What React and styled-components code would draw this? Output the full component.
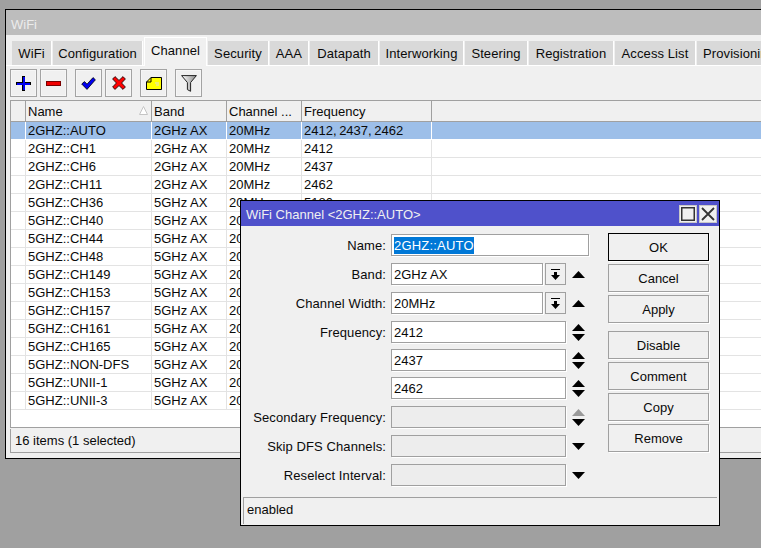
import React from "react";
import styled, { createGlobalStyle } from "styled-components";

const Global = createGlobalStyle`
  html, body { margin: 0; padding: 0; background: #a0a0a0; overflow: hidden; }
  body { font: 13px/16px "Liberation Sans", Arial, sans-serif; color: #0a0a0a; }
`;

const Desktop = styled.div`
  position: relative;
  width: 761px;
  height: 548px;
  overflow: hidden;
  background: #a0a0a0;
`;

const Win = styled.div`
  position: absolute;
  left: 5px;
  top: 9px;
  width: 800px;
  height: 450px;
  box-sizing: border-box;
  border: 1px solid #000;
  background: #f0f0f0;
  display: flex;
  flex-direction: column;
`;

const WinTitle = styled.div`
  height: 25px;
  flex: none;
  background: #bdbdbd;
  color: #ececec;
  padding-left: 5px;
  line-height: 29px;
  font-size: 13px;
`;

const TabStrip = styled.div`
  height: 31px;
  flex: none;
  box-sizing: border-box;
  border-bottom: 1px solid #fff;
  padding-left: 6px;
  display: flex;
  align-items: flex-end;
  gap: 1px;
`;

const Tab = styled.div`
  flex: none;
  box-sizing: border-box;
  width: ${(p) => p.$w}px;
  height: ${(p) => (p.$active ? 29 : 24)}px;
  margin-bottom: ${(p) => (p.$active ? -1 : 0)}px;
  background: ${(p) => (p.$active ? "#f0f0f0" : "#d9d9d9")};
  border-right: 1px solid #fff;
  ${(p) => p.$active && "border-top: 1px solid #fff; border-left: 1px solid #fff;"}
  text-align: center;
  line-height: ${(p) => (p.$active ? 25 : 26)}px;
  letter-spacing: 0.1px;
  white-space: nowrap;
  overflow: hidden;
`;

const ProvTab = styled(Tab)`
  text-align: left;
  padding-left: 6px;
`;

const Toolbar = styled.div`
  height: 34px;
  flex: none;
  box-sizing: border-box;
  padding: 3px 0 0 4px;
  display: flex;
  gap: 8px;
`;

const ToolGroup = styled.div`
  display: flex;
  gap: 3px;
`;

const ToolButton = styled.div`
  width: 27px;
  height: 28px;
  box-sizing: border-box;
  border: 1px solid #a3a3a3;
  box-shadow: inset 0 0 0 1px #f6f6f6;
  background: #f0f0f0;
  display: flex;
  align-items: center;
  justify-content: center;
`;

const Table = styled.div`
  flex: 1;
  margin-left: 4px;
  box-sizing: border-box;
  border: 1px solid #a0a0a0;
  border-right: none;
  background: #fff;
  overflow: hidden;
`;

const HeadRow = styled.div`
  display: grid;
  grid-template-columns: 15px 126px 75px 75px 130px 1fr;
  height: 21px;
  box-sizing: border-box;
  background: #f0f0f0;
  border-bottom: 1px solid #a0a0a0;
`;

const HeadCell = styled.div`
  position: relative;
  box-sizing: border-box;
  border-right: 1px solid #a0a0a0;
  padding-left: 2px;
  line-height: 21px;
  white-space: nowrap;
  overflow: hidden;
`;

const SortMark = styled.svg`
  position: absolute;
  right: 3px;
  top: 5px;
`;

const Row = styled.div`
  display: grid;
  grid-template-columns: 15px 126px 75px 75px 130px 1fr;
  height: 18px;
  box-sizing: border-box;
  border-bottom: 1px solid ${(p) => (p.$sel ? "#fff" : "#e3e3e3")};
  background: ${(p) => (p.$sel ? "#9dbfe9" : "#fff")};
`;

const Cell = styled.div`
  box-sizing: border-box;
  border-right: 1px solid ${(p) => (p.$sel ? "#fff" : "#e3e3e3")};
  padding-left: 2px;
  line-height: 17px;
  white-space: nowrap;
  overflow: hidden;
  word-spacing: ${(p) => (p.$list ? "-1px" : "0")};
`;

const FillCell = styled.div``;

const WinStatus = styled.div`
  height: 23px;
  flex: none;
  margin: 1px 0 5px 4px;
  border-left: 1px solid #a0a0a0;
  border-bottom: 1px solid #a0a0a0;
  padding-left: 4px;
  line-height: 23px;
  background: #f0f0f0;
`;

const Dialog = styled.div`
  position: absolute;
  left: 240px;
  top: 200px;
  width: 480px;
  height: 326px;
  box-sizing: border-box;
  border: 1px solid #000;
  background: #f0f0f0;
  display: flex;
  flex-direction: column;
`;

const DlgTitle = styled.div`
  height: 25px;
  flex: none;
  box-sizing: border-box;
  background: #4f51cb;
  color: #f0f0f0;
  padding: 4px 2px 0 5px;
  display: flex;
  justify-content: space-between;
  line-height: 20px;
`;

const WinBtns = styled.div`
  display: flex;
  gap: 2px;
`;

const WinBtn = styled.div`
  width: 18px;
  height: 18px;
  box-sizing: border-box;
  background: #f0f0f0;
  border: 1px solid #c8c8c8;
  display: flex;
  align-items: center;
  justify-content: center;
`;

const DlgMain = styled.div`
  flex: 1;
  display: flex;
  min-height: 0;
`;

const Form = styled.div`
  width: 367px;
  flex: none;
  padding-top: 8px;
  box-sizing: border-box;
  display: flex;
  flex-direction: column;
`;

const FormRow = styled.div`
  display: flex;
  height: 22px;
  align-items: center;
  margin-top: ${(p) => p.$mt ?? 7}px;
`;

const Label = styled.div`
  width: 145px;
  height: 22px;
  margin-right: 5px;
  flex: none;
  text-align: right;
  white-space: nowrap;
  line-height: 24px;
  letter-spacing: 0.1px;
`;

const Field = styled.div`
  width: ${(p) => p.$w}px;
  height: 22px;
  flex: none;
  box-sizing: border-box;
  border: 1px solid #a0a0a0;
  box-shadow: 1px 1px 0 #fff;
  background: ${(p) => (p.$off ? "#ededed" : "#fff")};
  padding-left: 2px;
  line-height: 21px;
  white-space: nowrap;
`;

const Selected = styled.span`
  background: #0078d7;
  color: #fff;
  display: inline-block;
  height: 17px;
  margin-top: 2px;
  line-height: 17px;
  letter-spacing: 0.2px;
  vertical-align: top;
`;

const DropBtn = styled.div`
  width: 21px;
  height: 22px;
  flex: none;
  margin-left: 2px;
  box-sizing: border-box;
  border: 1px solid #a0a0a0;
  display: flex;
  align-items: center;
  justify-content: center;
`;

const ArrowSlot = styled.div`
  width: 13px;
  flex: none;
  margin-left: ${(p) => p.$ml ?? 6}px;
  display: flex;
  align-items: center;
  justify-content: center;
`;

const Actions = styled.div`
  width: 101px;
  padding-top: 7px;
  display: flex;
  flex-direction: column;
`;

const ActionBtn = styled.div`
  height: 28px;
  flex: none;
  box-sizing: border-box;
  border: 1px solid ${(p) => (p.$def ? "#000" : "#a0a0a0")};
  box-shadow: 1px 1px 0 #fff;
  margin-top: ${(p) => p.$mt ?? 3}px;
  text-align: center;
  line-height: 27px;
`;

const DlgStatus = styled.div`
  height: 27px;
  flex: none;
  margin: 0 2px 1px 2px;
  box-sizing: border-box;
  border-top: 1px solid #a0a0a0;
  border-left: 1px solid #a0a0a0;
  padding-left: 3px;
  line-height: 23px;
`;

const Plus = () => (
  <svg width="15" height="15" viewBox="0 0 15 15" shapeRendering="crispEdges">
    <path d="M6 0h3v6h6v3H9v6H6V9H0V6h6z" fill="#000" />
    <path d="M6.500 1h2v5.500H14v2H8.500V14h-2V8.500H1v-2h5.500z" fill="#0000f0" />
  </svg>
);
const Minus = () => (
  <svg width="15" height="5" viewBox="0 0 15 5" shapeRendering="crispEdges">
    <rect width="15" height="5" fill="#7a0000" />
    <rect x="1" y="1" width="13" height="3" fill="#f00000" />
  </svg>
);
const Check = () => (
  <svg width="15" height="13" viewBox="0 0 15 13">
    <path d="M.7 7l2.800-2.400L6 7.200 12 .6l2.400 2.200L6 12.400z" fill="#0000f0" stroke="#000" strokeWidth=".8" />
  </svg>
);
const Cross = () => (
  <svg width="14" height="14" viewBox="0 0 14 14">
    <path d="M3 .6L7 4.400 11 .6l2.400 2.400L9.600 7l3.800 4-2.400 2.400L7 9.600l-4 3.800L.6 11l3.800-4L.6 3z" fill="#ff0000" stroke="#000" strokeWidth=".8" />
  </svg>
);
const Note = () => (
  <svg width="16" height="13" viewBox="0 0 16 13">
    <path d="M5 .5h10.500v12H.5V5z" fill="#ffff00" stroke="#000" />
    <path d="M.5 5H5V.5" fill="none" stroke="#000" />
    <path d="M9 6h4M10 8h3" stroke="#ddd" />
  </svg>
);
const Funnel = () => (
  <svg width="16" height="17" viewBox="0 0 16 17">
    <defs>
      <linearGradient id="fg" x1="0" x2="1">
        <stop offset="0" stopColor="#fff" />
        <stop offset="1" stopColor="#8a8a8a" />
      </linearGradient>
    </defs>
    <path d="M.6.6h14.800L9.600 7.500v8.800L6.400 14.600V7.500z" fill="url(#fg)" stroke="#222" />
  </svg>
);
const Up = ({ c = "#000" }) => (
  <svg width="13" height="7" viewBox="0 0 13 7" style={{ display: "block" }}>
    <path d="M6.500 0L13 7H0z" fill={c} />
  </svg>
);
const Down = ({ c = "#000" }) => (
  <svg width="13" height="7" viewBox="0 0 13 7" style={{ display: "block" }}>
    <path d="M0 0h13L6.500 7z" fill={c} />
  </svg>
);
const UpDown = ({ off }) => (
  <svg width="13" height="17" viewBox="0 0 13 17">
    <path d="M6.500 0L13 7H0z" fill={off ? "#9a9a9a" : "#000"} />
    <path d="M0 10h13l-6.500 7z" fill="#000" />
  </svg>
);
const DropIcon = () => (
  <svg width="11" height="11" viewBox="0 0 11 11">
    <path d="M1 .5h9" stroke="#000" strokeWidth="1" />
    <path d="M4 3h3v3h3l-4.500 5L1 6h3z" fill="#000" />
  </svg>
);

const TABS = [
  ["WiFi", 40],
  ["Configuration", 90],
  ["Channel", 63, true],
  ["Security", 61],
  ["AAA", 39],
  ["Datapath", 69],
  ["Interworking", 84],
  ["Steering", 63],
  ["Registration", 85],
  ["Access List", 81],
];

const ROWS = [
  ["2GHZ::AUTO", "2GHz AX", "20MHz", "2412, 2437, 2462"],
  ["2GHZ::CH1", "2GHz AX", "20MHz", "2412"],
  ["2GHZ::CH6", "2GHz AX", "20MHz", "2437"],
  ["2GHZ::CH11", "2GHz AX", "20MHz", "2462"],
  ["5GHZ::CH36", "5GHz AX", "20MHz", "5180"],
  ["5GHZ::CH40", "5GHz AX", "20MHz", "5200"],
  ["5GHZ::CH44", "5GHz AX", "20MHz", "5220"],
  ["5GHZ::CH48", "5GHz AX", "20MHz", "5240"],
  ["5GHZ::CH149", "5GHz AX", "20MHz", "5745"],
  ["5GHZ::CH153", "5GHz AX", "20MHz", "5765"],
  ["5GHZ::CH157", "5GHz AX", "20MHz", "5785"],
  ["5GHZ::CH161", "5GHz AX", "20MHz", "5805"],
  ["5GHZ::CH165", "5GHz AX", "20MHz", "5825"],
  ["5GHZ::NON-DFS", "5GHz AX", "20MHz", ""],
  ["5GHZ::UNII-1", "5GHz AX", "20MHz", ""],
  ["5GHZ::UNII-3", "5GHz AX", "20MHz", ""],
];

export default function App() {
  return (
    <Desktop>
      <Global />
      <Win>
        <WinTitle>WiFi</WinTitle>
        <TabStrip>
          {TABS.map(([t, w, a]) => (
            <Tab key={t} $w={w} $active={a}>
              {t}
            </Tab>
          ))}
          <ProvTab $w={90}>Provisioning</ProvTab>
        </TabStrip>
        <Toolbar>
          <ToolGroup>
            <ToolButton><Plus /></ToolButton>
            <ToolButton><Minus /></ToolButton>
          </ToolGroup>
          <ToolGroup>
            <ToolButton><Check /></ToolButton>
            <ToolButton><Cross /></ToolButton>
          </ToolGroup>
          <ToolGroup>
            <ToolButton><Note /></ToolButton>
          </ToolGroup>
          <ToolGroup>
            <ToolButton><Funnel /></ToolButton>
          </ToolGroup>
        </Toolbar>
        <Table>
          <HeadRow>
            <HeadCell />
            <HeadCell>
              Name
              <SortMark width="9" height="9" viewBox="0 0 9 9">
                <path d="M4.500.5L8.500 8.500H.5z" fill="#fff" stroke="#c4c4c4" />
              </SortMark>
            </HeadCell>
            <HeadCell>Band</HeadCell>
            <HeadCell>Channel ...</HeadCell>
            <HeadCell>Frequency</HeadCell>
            <FillCell />
          </HeadRow>
          {ROWS.map((r, i) => (
            <Row key={r[0]} $sel={i === 0}>
              <Cell $sel={i === 0} />
              {r.map((c, j) => (
                <Cell key={j} $sel={i === 0} $list={j === 3}>{c}</Cell>
              ))}
              <FillCell />
            </Row>
          ))}
        </Table>
        <WinStatus>16 items (1 selected)</WinStatus>
      </Win>
      <Dialog>
        <DlgTitle>
          <span>WiFi Channel &lt;2GHZ::AUTO&gt;</span>
          <WinBtns>
            <WinBtn>
              <svg width="14" height="14" viewBox="0 0 14 14">
                <rect x=".75" y=".75" width="12.500" height="12.500" fill="none" stroke="#333" strokeWidth="1.500" />
              </svg>
            </WinBtn>
            <WinBtn>
              <svg width="14" height="14" viewBox="0 0 14 14">
                <path d="M1 1l12 12M13 1L1 13" stroke="#333" strokeWidth="1.800" />
              </svg>
            </WinBtn>
          </WinBtns>
        </DlgTitle>
        <DlgMain>
          <Form>
            <FormRow $mt={0}>
              <Label>Name:</Label>
              <Field $w={198}><Selected>2GHZ::AUTO</Selected></Field>
            </FormRow>
            <FormRow>
              <Label>Band:</Label>
              <Field $w={152}>2GHz AX</Field>
              <DropBtn><DropIcon /></DropBtn>
              <ArrowSlot><Up /></ArrowSlot>
            </FormRow>
            <FormRow>
              <Label>Channel Width:</Label>
              <Field $w={152}>20MHz</Field>
              <DropBtn><DropIcon /></DropBtn>
              <ArrowSlot><Up /></ArrowSlot>
            </FormRow>
            <FormRow>
              <Label>Frequency:</Label>
              <Field $w={175}>2412</Field>
              <ArrowSlot><UpDown /></ArrowSlot>
            </FormRow>
            <FormRow $mt={6}>
              <Label />
              <Field $w={175}>2437</Field>
              <ArrowSlot><UpDown /></ArrowSlot>
            </FormRow>
            <FormRow $mt={6}>
              <Label />
              <Field $w={175}>2462</Field>
              <ArrowSlot><UpDown /></ArrowSlot>
            </FormRow>
            <FormRow>
              <Label>Secondary Frequency:</Label>
              <Field $w={175} $off />
              <ArrowSlot><UpDown off /></ArrowSlot>
            </FormRow>
            <FormRow>
              <Label>Skip DFS Channels:</Label>
              <Field $w={175} $off />
              <ArrowSlot><Down /></ArrowSlot>
            </FormRow>
            <FormRow>
              <Label>Reselect Interval:</Label>
              <Field $w={175} $off />
              <ArrowSlot><Down /></ArrowSlot>
            </FormRow>
          </Form>
          <Actions>
            <ActionBtn $def $mt={0}>OK</ActionBtn>
            <ActionBtn>Cancel</ActionBtn>
            <ActionBtn>Apply</ActionBtn>
            <ActionBtn $mt={8}>Disable</ActionBtn>
            <ActionBtn>Comment</ActionBtn>
            <ActionBtn>Copy</ActionBtn>
            <ActionBtn>Remove</ActionBtn>
          </Actions>
        </DlgMain>
        <DlgStatus>enabled</DlgStatus>
      </Dialog>
    </Desktop>
  );
}
